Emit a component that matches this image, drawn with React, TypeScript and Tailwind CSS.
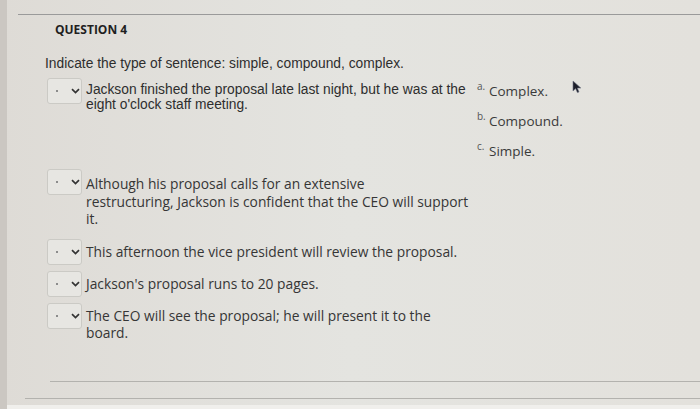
import React from "react";

const answers = [
  { key: "a.", label: "Complex." },
  { key: "b.", label: "Compound." },
  { key: "c.", label: "Simple." },
];

function Select() {
  return (
    <div className="flex h-[26px] w-[35px] shrink-0 items-center justify-between rounded-[3px] border border-[#cbcac5] bg-[#e7e6e2] pl-[8px] pr-[1px]">
      <span className="h-[2px] w-[2px] bg-[#8c8c8c]" />
      <svg width="9" height="6" viewBox="0 0 9 6" fill="none">
        <path d="M1 1.2 L4.5 4.6 L8 1.2" stroke="#333" strokeWidth="1.7" />
      </svg>
    </div>
  );
}

function Cursor() {
  return (
    <svg className="absolute left-[572px] top-[80px]" width="10" height="14" viewBox="0 0 10 14">
      <path d="M1 1 L1 11 L3.6 8.6 L5.4 12.6 L7 11.9 L5.3 8 L8.8 8 Z" fill="#1d1f2a" stroke="#6b7080" strokeWidth="0.6" />
    </svg>
  );
}

export default function App() {
  return (
    <div className="relative flex h-[409px] w-[700px] overflow-hidden bg-gradient-to-r from-[#dedbd6] via-[#e4e4e0] to-[#e3e1dc] font-['Open_Sans',sans-serif] text-[#363636]">
      <div className="w-[7px] shrink-0 bg-[#cbc7c2]" />
      <div className="flex flex-1 flex-col">
        <div className="mt-[14px] ml-[11px] h-px bg-[#9a9a9a]" />

        <div className="ml-[48px] mt-[8px] text-[12px] font-bold leading-[14px] text-[#1f1f1f]">QUESTION 4</div>

        <div className="ml-[38px] mt-[19px] font-['Liberation_Sans',Arial,sans-serif] text-[13.8px] leading-[15px] text-[#2e2e2e]">
          Indicate the type of sentence: simple, compound, complex.
        </div>

        {/* first match row with the answer list */}
        <div className="ml-[40px] mt-[7px] flex items-start">
          <Select />
          <div className="ml-[4px] mt-[4px] w-[384px] font-['Liberation_Sans',Arial,sans-serif] text-[13.8px] leading-[15px] text-[#2e2e2e]">
            Jackson finished the proposal late last night, but he was at the
            <br />
            eight o'clock staff meeting.
          </div>
          <div className="ml-[7px] -mt-[2px] flex flex-col">
            {answers.map((a) => (
              <div key={a.key} className="flex h-[30px] items-center">
                <span className="mb-[10px] w-[12px] text-[10px] leading-[10px] text-[#555]">{a.key}</span>
                <span className="text-[13.5px] leading-[18px] text-[#3a3a3a]">{a.label}</span>
              </div>
            ))}
          </div>
        </div>

        <div className="ml-[40px] mt-[3px] flex items-start">
          <Select />
          <div className="ml-[4px] mt-[6px] text-[13.8px] leading-[17.5px]">
            Although his proposal calls for an extensive
            <br />
            restructuring, Jackson is confident that the CEO will support
            <br />
            it.
          </div>
        </div>

        <div className="ml-[40px] mt-[11px] flex items-start">
          <Select />
          <div className="ml-[4px] mt-[4px] text-[13.8px] leading-[17.5px]">
            This afternoon the vice president will review the proposal.
          </div>
        </div>

        <div className="ml-[40px] mt-[6px] flex items-start">
          <Select />
          <div className="ml-[4px] mt-[4px] text-[13.8px] leading-[17.5px]">Jackson's proposal runs to 20 pages.</div>
        </div>

        <div className="ml-[40px] mt-[6px] flex items-start">
          <Select />
          <div className="ml-[4px] mt-[4px] text-[13.8px] leading-[17.5px]">
            The CEO will see the proposal; he will present it to the
            <br />
            board.
          </div>
        </div>

        <div className="flex-1" />
        <div className="ml-[43px] h-px bg-[#b3b2ae]" />
        <div className="mt-[16px] ml-[18px] h-px bg-[#b3b2ae]" />
        <div className="mt-[6px] h-[4px] bg-[#f0efec]" />
      </div>
      <Cursor />
    </div>
  );
}
